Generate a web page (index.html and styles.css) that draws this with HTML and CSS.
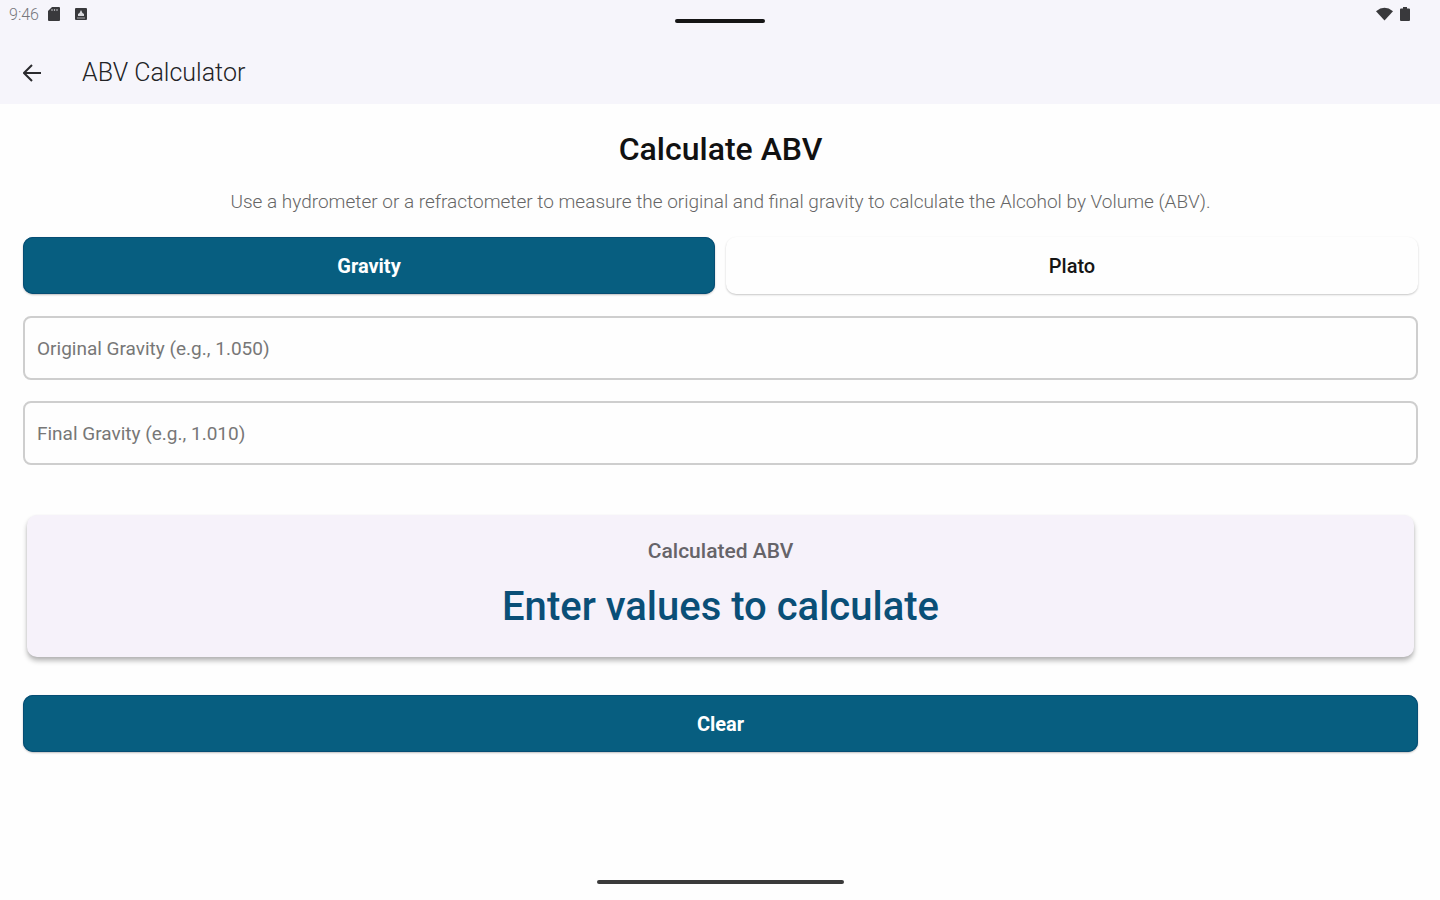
FILE: index.html
```html
<!DOCTYPE html>
<html lang="en">
<head>
<meta charset="utf-8">
<meta name="viewport" content="width=device-width, initial-scale=1">
<title>ABV Calculator</title>
<link rel="stylesheet" href="styles.css">
</head>
<body>
<header class="top">
  <div class="status">
    <div class="status-group">
      <span class="clock">9:46</span>
      <svg class="status-icon sd" viewBox="0 0 12 14" aria-hidden="true"><path d="M4 0h7q1 0 1 1v12q0 1-1 1H1q-1 0-1-1V4z" fill="#39393c"/><path d="M4 2v2M6.500 2v2M9 2v2" stroke="#aaaaae" stroke-width="1.200"/></svg>
      <svg class="status-icon app" viewBox="0 0 12 12" aria-hidden="true"><rect width="12" height="12" rx="1" fill="#39393c"/><path d="M6 2l1.500 3L9 6v2H3V6l1.500-1z" fill="#d8d8dc"/><path d="M2 10h8" stroke="#a8a8ac"/></svg>
    </div>
    <div class="handle"></div>
    <div class="status-group status-end">
      <svg class="status-icon wifi" viewBox="0 0 18 14" aria-hidden="true"><path d="M0 4Q9-3 18 4L9 14z" fill="#39393c"/></svg>
      <svg class="status-icon battery" viewBox="0 0 10 14" aria-hidden="true"><path d="M3 0h4v1.500h2q1 0 1 1V13q0 1-1 1H1q-1 0-1-1V2.500q0-1 1-1h2z" fill="#39393c"/></svg>
    </div>
  </div>
  <div class="appbar">
    <button class="back" type="button" aria-label="Back">
      <svg viewBox="0 0 18 18" aria-hidden="true"><path d="M9 1L1 9l8 8M1 9h17" fill="none" stroke="#2b2b2e" stroke-width="2"/></svg>
    </button>
    <h1 class="title">ABV Calculator</h1>
  </div>
</header>
<main class="content">
  <h2 class="heading">Calculate ABV</h2>
  <p class="intro">Use a hydrometer or a refractometer to measure the original and final gravity to calculate the Alcohol by Volume (ABV).</p>
  <div class="units">
    <button class="button primary" type="button" aria-pressed="true">Gravity</button>
    <button class="button plain" type="button" aria-pressed="false">Plato</button>
  </div>
  <form class="fields">
    <input class="field" type="text" aria-label="Original Gravity" placeholder="Original Gravity (e.g., 1.050)">
    <input class="field" type="text" aria-label="Final Gravity" placeholder="Final Gravity (e.g., 1.010)">
  </form>
  <section class="result">
    <h3 class="result-label">Calculated ABV</h3>
    <output class="result-value">Enter values to calculate</output>
  </section>
  <button class="button primary" type="button">Clear</button>
</main>
<footer class="navbar"><div class="nav-handle"></div></footer>
</body>
</html>
```
FILE: styles.css
```css
* { box-sizing: border-box; }
body {
  margin: 0;
  min-height: 100vh;
  display: flex;
  flex-direction: column;
  background: #fefefe;
  color: #111;
  font-family: Roboto, "Liberation Sans", sans-serif;
}
h1, h2, h3, p { margin: 0; }
.top { background: #f6f5fb; }
.status {
  display: grid;
  grid-template-columns: 1fr auto 1fr;
  align-items: center;
  height: 41px;
}
.status-group {
  display: flex;
  align-items: center;
  align-self: start;
  height: 28px;
  padding-left: 9px;
}
.status-end { justify-content: flex-end; gap: 7px; padding: 0 30px 0 0; }
.clock { font-size: 16px; font-weight: 300; color: #77777c; }
.sd { width: 12px; height: 14px; margin-left: 9px; }
.app { width: 12px; height: 12px; margin-left: 15px; }
.wifi { width: 17px; height: 14px; }
.battery { width: 10px; height: 14px; }
.handle { width: 90px; height: 4px; border-radius: 2px; background: #151515; }
.appbar {
  display: flex;
  align-items: center;
  gap: 32px;
  height: 63px;
  padding: 0 14px;
}
.back {
  display: grid;
  place-items: center;
  width: 36px;
  height: 36px;
  padding: 0;
  border: 0;
  background: none;
}
.back svg { width: 18px; height: 18px; }
.title { font-size: 25px; line-height: 32px; font-weight: 300; color: #222225; }
.content {
  flex: 1;
  display: flex;
  flex-direction: column;
  padding: 23px 22px 0 23px;
}
.heading {
  font-size: 32px;
  line-height: 44px;
  font-weight: 500;
  text-align: center;
}
.intro {
  margin-top: 19px;
  font-size: 19px;
  line-height: 24px;
  font-weight: 300;
  text-align: center;
  color: #666;
}
.units {
  display: grid;
  grid-template-columns: 1fr 1fr;
  gap: 11px;
  margin-top: 23px;
}
.button {
  height: 57px;
  border: 0;
  border-radius: 10px;
  font: 700 20px/24px Roboto, "Liberation Sans", sans-serif;
}
.primary {
  background: #075e80;
  color: #fff;
  box-shadow: inset 0 0 0 1px #064d74, 0 1px 2px rgba(0, 0, 0, .25);
}
.plain {
  background: #fefefe;
  color: #151515;
  font-weight: 500;
  box-shadow: 0 1px 2px rgba(0, 0, 0, .22);
}
.fields {
  display: flex;
  flex-direction: column;
  gap: 21px;
  margin-top: 22px;
}
.field {
  width: 100%;
  height: 64px;
  padding: 0 12px;
  border: 2px solid #cecece;
  border-radius: 8px;
  background: transparent;
  color: #111;
  font: 400 19px/24px Roboto, "Liberation Sans", sans-serif;
}
.field::placeholder { color: #777; opacity: 1; }
.result {
  display: flex;
  flex-direction: column;
  align-items: center;
  gap: 18px;
  margin: 50px 4px 38px;
  padding: 24px;
  border-radius: 10px;
  background: #f6f2fa;
  box-shadow: 0 4px 5px rgba(0, 0, 0, .26), 0 1px 3px rgba(0, 0, 0, .08);
}
.result-label { font-size: 21px; line-height: 24px; font-weight: 500; color: #666469; }
.result-value { font-size: 40px; line-height: 52px; font-weight: 500; color: #0a4f77; }
.navbar { display: flex; justify-content: center; padding-bottom: 16px; }
.nav-handle { width: 247px; height: 4px; border-radius: 2px; background: #3a3a3a; }
```
